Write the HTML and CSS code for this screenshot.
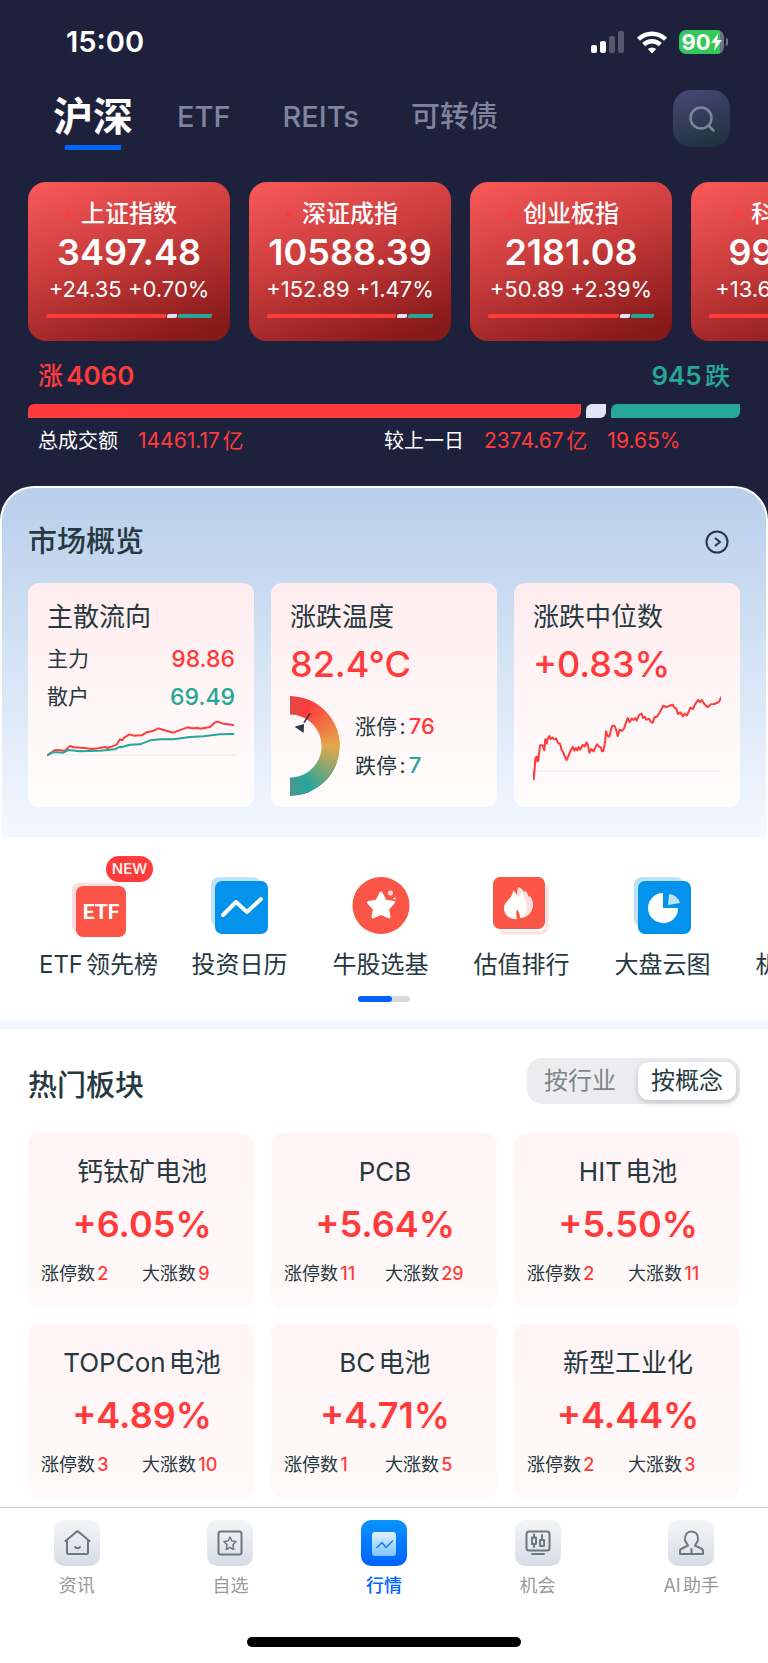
FILE: index.html
```html
<!DOCTYPE html>
<html lang="zh-CN">
<head>
    <meta charset="UTF-8">
    <meta name="viewport" content="width=device-width, initial-scale=1.0">
    <title>行情 - 沪深</title>
    <link rel="stylesheet" href="styles.css">
</head>
<body>

<header class="top">
    <!-- Status bar -->
    <div class="status">
        <span class="time">15:00</span>
        <div class="status-icons">
            <svg width="34" height="24" viewBox="0 0 34 24" fill="#fff">
                <rect x="0" y="15" width="6" height="8" rx="2"/>
                <rect x="9" y="11" width="6" height="12" rx="2"/>
                <rect x="18" y="6" width="6" height="17" rx="2" opacity=".25"/>
                <rect x="27" y="1" width="6" height="22" rx="2" opacity=".25"/>
            </svg>
            <svg width="30" height="24" viewBox="0 0 30 24" fill="none" stroke="#fff" stroke-width="4.5">
                <path d="M1.5 9.2a19.2 19.2 0 0 1 27 0"/>
                <path d="M6.7 14.6a11.8 11.8 0 0 1 16.6 0"/>
                <path d="M15 23.5l-4.2-4.4a6 6 0 0 1 8.4 0z" fill="#fff" stroke="none"/>
            </svg>
            <div class="battery">
                <span>90</span>
                <svg width="11" height="18" viewBox="0 0 11 18"><path d="M7.5 0L0 10h4.5L3 18l8-11H6.2z" fill="#fff"/></svg>
            </div>
        </div>
    </div>

    <!-- Market tabs -->
    <div class="nav">
        <nav class="tabs">
            <a href="#" class="active">沪深</a>
            <a href="#">ETF</a>
            <a href="#">REITs</a>
            <a href="#">可转债</a>
        </nav>
        <button class="search-btn" aria-label="搜索">
            <svg width="28" height="28" viewBox="0 0 28 28" fill="none" stroke="#7b8794" stroke-width="2.5" stroke-linecap="round">
                <circle cx="13" cy="13" r="10.5"/>
                <path d="M20.5 20.5l5 5"/>
            </svg>
        </button>
    </div>

    <!-- Index cards -->
    <div class="indices">
        <article class="index-card">
            <h3>上证指数</h3>
            <strong>3497.48</strong>
            <p>+24.35 +0.70%</p>
            <div class="bar"><i class="up" style="flex-grow:119"></i><i class="flat"></i><i class="down" style="flex-grow:34"></i></div>
        </article>
        <article class="index-card">
            <h3>深证成指</h3>
            <strong>10588.39</strong>
            <p>+152.89 +1.47%</p>
            <div class="bar"><i class="up" style="flex-grow:127"></i><i class="flat"></i><i class="down" style="flex-grow:25"></i></div>
        </article>
        <article class="index-card">
            <h3>创业板指</h3>
            <strong>2181.08</strong>
            <p>+50.89 +2.39%</p>
            <div class="bar"><i class="up" style="flex-grow:129"></i><i class="flat"></i><i class="down" style="flex-grow:23"></i></div>
        </article>
        <article class="index-card">
            <h3>科创50</h3>
            <strong>994.45</strong>
            <p>+13.62 +1.39%</p>
            <div class="bar"><i class="up" style="flex-grow:125"></i><i class="flat"></i><i class="down" style="flex-grow:27"></i></div>
        </article>
    </div>

    <!-- Rise / fall breadth -->
    <div class="breadth">
        <span class="red">涨<b>4060</b></span>
        <span class="green"><b>945</b>跌</span>
    </div>
    <div class="bar breadth-bar"><i class="up" style="flex-grow:554"></i><i class="flat"></i><i class="down" style="flex-grow:129"></i></div>
    <div class="turnover">
        <p><span>总成交额</span><em>14461.17亿</em></p>
        <p><span>较上一日</span><em>2374.67亿</em><em>19.65%</em></p>
    </div>
</header>

<!-- Market overview -->
<section class="overview">
    <div class="overview-head">
        <h2>市场概览</h2>
        <a href="#" class="more" aria-label="更多">
            <svg width="24" height="24" viewBox="0 0 24 24" fill="none" stroke="#263840" stroke-width="2">
                <circle cx="12" cy="12" r="10.5"/>
                <path d="M10 8l5 4-5 4"/>
            </svg>
        </a>
    </div>
    <div class="cards">
        <article class="card">
            <h3>主散流向</h3>
            <dl class="flow">
                <div><dt>主力</dt><dd class="red">98.86</dd></div>
                <div><dt>散户</dt><dd class="green">69.49</dd></div>
            </dl>
            <svg class="flow-chart" viewBox="0 0 564 144" fill="none" stroke-width="6" stroke-linejoin="round">
                <path d="M0 117H566" stroke="#efefef" stroke-width="5"/>
                <path d="M0 118L24 102 40 103 54 105 64 94 70 90 79 94 114 96 134 99 154 97 174 93 181 96 196 91 209 86 215 76 219 70 225 73 232 65 247 55 259 59 284 58 299 49 315 46 334 37 350 42 379 50 395 44 421 34 434 37 454 36 459 38 489 33 503 20 511 17 529 23 545 25 561 28" stroke="#ff3b3b"/>
                <path d="M0 118L19 108 49 110 64 102 99 106 159 104 204 100 219 92 222 94 249 86 279 85 309 73 339 70 379 70 429 63 469 61 519 55 561 54" stroke="#26a699"/>
            </svg>
        </article>

        <article class="card">
            <h3>涨跌温度</h3>
            <strong class="value">82.4°C</strong>
            <div class="temp">
                <div class="gauge">
                    <svg width="50" height="100" viewBox="0 0 150 300">
                        <path d="M60 52L42 80" stroke="#263840" stroke-width="5"/>
                        <path d="M14 92l28-8-1 27z" fill="#263840"/>
                    </svg>
                </div>
                <ul>
                    <li>涨停:<b class="red">76</b></li>
                    <li>跌停:<b class="green">7</b></li>
                </ul>
            </div>
        </article>

        <article class="card">
            <h3>涨跌中位数</h3>
            <strong class="value">+0.83%</strong>
            <svg class="median-chart" viewBox="0 0 564 312" fill="none" stroke-width="6" stroke-linejoin="round">
                <path d="M8 237H566" stroke="#efefef" stroke-width="5"/>
                <path d="M0 238L2 262 5 230 7 200 11 194 13 208 16 206 21 160 29 160 34 175 37 142 41 154 45 138 49 132 53 141 58 136 63 142 69 139 76 154 81 155 86 174 91 181 96 195 101 204 107 190 112 178 119 165 124 176 128 168 133 175 137 165 142 173 149 159 155 163 161 151 165 160 169 182 175 171 182 178 188 164 192 157 198 164 204 167 207 178 211 177 216 152 219 118 224 132 229 134 234 113 238 101 244 101 249 112 254 132 260 113 267 117 273 109 279 92 284 78 290 90 296 80 301 84 307 78 311 86 319 68 326 65 330 78 335 74 340 83 348 80 354 90 359 92 365 75 371 75 379 63 391 41 399 45 409 42 419 38 425 48 430 50 435 67 442 61 450 73 455 65 461 71 467 60 472 47 480 51 486 37 495 24 501 30 506 24 513 34 519 42 525 45 533 37 543 36 550 34 559 28 565 14" stroke="#ff3b3b"/>
            </svg>
        </article>
    </div>
</section>

<!-- Quick links -->
<section class="quick">
    <div class="quick-list">
        <a href="#">
            <svg width="60" height="60" viewBox="0 0 60 60">
                <rect x="3" y="6" width="50" height="50" rx="7" fill="#fde0dd"/>
                <rect x="7" y="9" width="50" height="51" rx="7" fill="#fa5546"/>
                <text x="32" y="42" text-anchor="middle" class="etf-text">ETF</text>
            </svg>
            <span class="badge">NEW</span>
            <span>ETF领先榜</span>
        </a>
        <a href="#">
            <svg width="60" height="60" viewBox="0 0 60 60">
                <rect x="1" y="0" width="50" height="50" rx="8" fill="#bfe2fb"/>
                <rect x="5" y="4" width="53" height="53" rx="7" fill="#0392ec"/>
                <path d="M13 38L26 25 37 35 51 22" fill="none" stroke="#fff" stroke-width="4" stroke-linecap="round" stroke-linejoin="round"/>
            </svg>
            <span>投资日历</span>
        </a>
        <a href="#">
            <svg width="60" height="60" viewBox="0 0 60 60">
                <circle cx="30" cy="28.500" r="28.500" fill="#fa5546"/>
                <path d="M30 16L34 24 42.500 25.500 36.500 32 38 40 30 36.500 22 40 23.500 32 17.500 25.500 26 24z" fill="#fff" stroke="#fff" stroke-width="3" stroke-linejoin="round"/>
                <circle cx="39.500" cy="16" r="2.500" fill="#fde0dd"/>
                <circle cx="43.500" cy="21.500" r="1.200" fill="#fde0dd"/>
            </svg>
            <span>牛股选基</span>
        </a>
        <a href="#">
            <svg width="60" height="60" viewBox="0 0 60 60">
                <path d="M9 56H48a7 7 0 0 0 7-7V8" fill="none" stroke="#fde0dd" stroke-width="3"/>
                <rect x="1" y="0" width="52" height="52" rx="7" fill="#fa5546"/>
                <path d="M26 10q5 2 6 5l2-1q2 4 3 6l1-1q4 6 3 11-2 9-11 11l-7-12z" fill="#fde0dd"/>
                <path d="M21 13c4 4 4 6 5 8l4-6c3 9 8 14 3 22-1 2-3 4-5 4 0-4-1-7-3-9-1 3-1 7 0 10-7 1-13-4-13-11 0-7 9-9 9-18z" fill="#fff"/>
            </svg>
            <span>估值排行</span>
        </a>
        <a href="#">
            <svg width="60" height="60" viewBox="0 0 60 60">
                <rect x="1" y="0" width="50" height="50" rx="8" fill="#bfe2fb"/>
                <rect x="5" y="4" width="53" height="53" rx="7" fill="#0392ec"/>
                <path d="M45 34a15 15 0 0 1-17 12z" fill="#bfe2fb"/>
                <path d="M30 16v15h15a15 15 0 1 1-15-15z" fill="#fff"/>
                <path d="M36 17a12 12 0 0 1 11 9L35 28z" fill="#bfe2fb"/>
            </svg>
            <span>大盘云图</span>
        </a>
        <a href="#">
            <svg width="60" height="60" viewBox="0 0 60 60"></svg>
            <span>机构持仓</span>
        </a>
    </div>
    <div class="pager"><i></i></div>
</section>

<!-- Hot sectors -->
<section class="hot">
    <div class="hot-head">
        <h2>热门板块</h2>
        <div class="segment">
            <button>按行业</button>
            <button class="active">按概念</button>
        </div>
    </div>
    <div class="cards">
        <article class="sector">
            <h3>钙钛矿电池</h3>
            <strong>+6.05%</strong>
            <p><span>涨停数<b>2</b></span><span>大涨数<b>9</b></span></p>
        </article>
        <article class="sector">
            <h3>PCB</h3>
            <strong>+5.64%</strong>
            <p><span>涨停数<b>11</b></span><span>大涨数<b>29</b></span></p>
        </article>
        <article class="sector">
            <h3>HIT电池</h3>
            <strong>+5.50%</strong>
            <p><span>涨停数<b>2</b></span><span>大涨数<b>11</b></span></p>
        </article>
        <article class="sector">
            <h3>TOPCon电池</h3>
            <strong>+4.89%</strong>
            <p><span>涨停数<b>3</b></span><span>大涨数<b>10</b></span></p>
        </article>
        <article class="sector">
            <h3>BC电池</h3>
            <strong>+4.71%</strong>
            <p><span>涨停数<b>1</b></span><span>大涨数<b>5</b></span></p>
        </article>
        <article class="sector">
            <h3>新型工业化</h3>
            <strong>+4.44%</strong>
            <p><span>涨停数<b>2</b></span><span>大涨数<b>3</b></span></p>
        </article>
    </div>
</section>

<!-- Bottom tab bar -->
<footer class="tabbar">
    <nav>
        <a href="#">
            <svg width="46" height="46" viewBox="0 0 46 46">
                <path d="M13 20v12.500a1.500 1.500 0 0 0 1.500 1.500h18a1.500 1.500 0 0 0 1.500-1.500V20M11.500 21L23.500 11 35.500 21"/>
                <path d="M21 27q2.500 2.500 5 0"/>
            </svg>
            <span>资讯</span>
        </a>
        <a href="#">
            <svg width="46" height="46" viewBox="0 0 46 46">
                <rect x="11.500" y="11.500" width="23" height="23" rx="2"/>
                <path d="M23 17l1.900 4 4.100.6-3 3.200.7 4.700-3.700-2.200-3.700 2.200.7-4.700-3-3.200 4.100-.6z" stroke-width="1.500"/>
            </svg>
            <span>自选</span>
        </a>
        <a href="#" class="active">
            <svg width="46" height="46" viewBox="0 0 46 46">
                <defs>
                    <linearGradient id="tile" x1="0" y1="0" x2="0" y2="1">
                        <stop offset="0" stop-color="#e3f4ff"/>
                        <stop offset="1" stop-color="#7cc4ff"/>
                    </linearGradient>
                </defs>
                <rect x="11" y="12" width="24" height="24" rx="3" fill="url(#tile)" stroke="none"/>
                <path d="M16 27.500l5-5 4 5 6.500-6.500" stroke="#0a84ff" stroke-width="1.500"/>
            </svg>
            <span>行情</span>
        </a>
        <a href="#">
            <svg width="46" height="46" viewBox="0 0 46 46">
                <rect x="11.500" y="11.500" width="23" height="19" rx="2.500"/>
                <path d="M17 34H29M19 14.500v3M19 24v3M27 15v5"/>
                <rect x="17" y="17.500" width="4" height="6.500"/>
                <rect x="25" y="20" width="4" height="6"/>
            </svg>
            <span>机会</span>
        </a>
        <a href="#">
            <svg width="46" height="46" viewBox="0 0 46 46">
                <path d="M20 25.500L17 20.500q-.5-9 6.500-9t6.500 9L27 25.500 34 29q1 .5 1 2v3H12v-3q0-1.500 1-2z"/>
                <path d="M23.500 29v4"/>
            </svg>
            <span>AI助手</span>
        </a>
    </nav>
    <div class="home-indicator"></div>
</footer>

</body>
</html>
```
FILE: styles.css
```css
* {
    box-sizing: border-box;
}
body {
    margin: 0;
    font-family: Inter, "Noto Sans CJK SC", sans-serif;
    color: #263840;
    background-color: #fff;
    overflow-x: hidden;
    text-autospace: normal;
}
h2, h3, p, ul, dl, dd {
    margin: 0;
    padding: 0;
    font-weight: 400;
}
ul {
    list-style: none;
}
a {
    color: inherit;
    text-decoration: none;
}
button {
    border: none;
    padding: 0;
    font-family: inherit;
    color: inherit;
    cursor: pointer;
}
svg {
    display: block;
    flex-shrink: 0;
}
h2 {
    font-size: 29px;
    line-height: 40px;
    font-weight: 500;
}
.red {
    color: #ff3b3b;
}
.green {
    color: #26a699;
}

/* Header */
.top {
    background-color: #1e213c;
    color: #fff;
    padding: 26px 28px 65px;
    overflow: hidden;
}
.status {
    display: flex;
    justify-content: space-between;
    align-items: center;
    padding: 0 16px 0 38px;
}
.time {
    font-size: 29px;
    line-height: 32px;
    font-weight: 600;
}
.status-icons {
    display: flex;
    align-items: center;
    gap: 12px;
}
.battery {
    position: relative;
    display: flex;
    align-items: center;
    justify-content: center;
    width: 45px;
    height: 24px;
    border-radius: 7px;
    background: linear-gradient(to right, #34c759 91%, #6f7386 91%);
    font-size: 22px;
    font-weight: 700;
}
.battery::after {
    content: "";
    position: absolute;
    right: -4px;
    top: 8px;
    width: 2px;
    height: 8px;
    border-radius: 0 2px 2px 0;
    background-color: #6f7386;
}
.nav {
    display: flex;
    justify-content: space-between;
    align-items: flex-start;
    margin-top: 32px;
    padding: 0 10px 0 25px;
}
.tabs {
    display: flex;
    align-items: center;
    gap: 52px;
    font-size: 29px;
    line-height: 54px;
    font-weight: 500;
    color: #80849f;
}
.tabs .active {
    position: relative;
    margin-right: -8px;
    font-size: 40px;
    font-weight: 600;
    color: #fff;
}
.tabs .active::after {
    content: "";
    position: absolute;
    left: 12px;
    right: 12px;
    bottom: -6px;
    height: 5px;
    background-color: #0062ff;
}
.search-btn {
    display: flex;
    align-items: center;
    justify-content: center;
    width: 57px;
    height: 57px;
    border-radius: 18px;
    background: linear-gradient(160deg, #4a4878, #2c3a52 60%, #1b2f3a);
}

/* Index cards */
.indices {
    display: flex;
    gap: 19px;
    margin-top: 35px;
}
.index-card {
    flex: 0 0 202px;
    padding: 18px 18px 23px;
    border-radius: 18px;
    background: linear-gradient(160deg, #f55656 5%, #c83b3b 45%, #871919 92%);
    text-align: center;
}
.index-card h3 {
    display: flex;
    align-items: center;
    justify-content: center;
    gap: 10px;
    padding-right: 16px;
    font-size: 24px;
    line-height: 28px;
    font-weight: 500;
}
.index-card h3::before {
    content: "";
    width: 6px;
    height: 6px;
    border-radius: 50%;
    background-color: #ff3b3b;
}
.index-card strong {
    display: block;
    margin: 0 -10px;
    font-size: 36px;
    line-height: 48px;
    font-weight: 600;
}
.index-card p {
    margin: 0 -10px;
    font-size: 22px;
    line-height: 26px;
    white-space: nowrap;
}

/* Up / flat / down bar */
.bar {
    display: flex;
    gap: 1px;
    height: 4px;
    margin-top: 12px;
}
.bar i {
    flex-basis: 0;
    border-radius: 2px 0;
}
.bar .up {
    background-color: #ff3b3b;
}
.bar .flat {
    flex: 0 0 10px;
    background-color: #e0e4f7;
}
.bar .down {
    background-color: #26a699;
}
.breadth {
    display: flex;
    justify-content: space-between;
    margin-top: 19px;
    padding: 0 10px;
    font-size: 25px;
    line-height: 32px;
    font-weight: 500;
}
.breadth b {
    font-size: 26px;
    font-weight: 600;
}
.breadth-bar {
    gap: 5px;
    height: 14px;
}
.breadth-bar i {
    border-radius: 6px 0;
}
.breadth-bar .flat {
    flex-basis: 20px;
}
.turnover {
    display: grid;
    grid-template-columns: 1fr 1fr;
    margin-top: 9px;
    padding-left: 10px;
    font-size: 20px;
    line-height: 28px;
}
.turnover p {
    display: flex;
    gap: 20px;
    white-space: nowrap;
}
.turnover p + p {
    margin-left: -5px;
}
.turnover em {
    color: #ff3b3b;
    font-size: 21px;
    font-style: normal;
}

/* Market overview */
.overview {
    position: relative;
    margin-top: -34px;
    padding: 34px 26px 30px;
    border: 2px solid #fff;
    border-bottom: none;
    border-radius: 34px 34px 0 0;
    background: linear-gradient(#b8cfeb, #c6d9f0 25%, #f3f8ff);
}
.overview-head {
    display: flex;
    justify-content: space-between;
    align-items: center;
    margin-bottom: 21px;
    padding-right: 11px;
}
.cards {
    display: grid;
    grid-template-columns: repeat(3, 1fr);
    gap: 17px;
}
.card {
    padding: 17px 19px 11px;
    border-radius: 11px;
    background: linear-gradient(#ffecee, #fff5f6 50%, #fffcfc);
}
.card h3 {
    font-size: 26px;
    line-height: 34px;
    white-space: nowrap;
}
.flow {
    margin-top: 6px;
    font-size: 21px;
    line-height: 38px;
}
.flow div {
    display: flex;
    justify-content: space-between;
}
.flow dd {
    font-size: 23px;
    font-weight: 500;
}
.flow-chart, .median-chart {
    width: 100%;
}
.median-chart {
    margin-top: 4px;
}
.value {
    display: block;
    margin-top: 6px;
    font-size: 36px;
    line-height: 48px;
    font-weight: 500;
    color: #ff3b3b;
}
.temp {
    display: flex;
    align-items: center;
    gap: 15px;
    margin-top: 8px;
    font-size: 21px;
    line-height: 38px;
}
.temp b {
    margin-left: 3px;
    font-size: 22px;
    font-weight: 500;
}
.gauge {
    position: relative;
    width: 50px;
    height: 100px;
}
/* half ring, masked out of a conic gradient */
.gauge::before {
    content: "";
    position: absolute;
    inset: 0;
    border-radius: 0 50px 50px 0;
    background: conic-gradient(from 0deg at 0 50%, #de4848, #ff3b3b 25deg, #e3a84c 90deg, #26a699 155deg, #4a968c 180deg);
    -webkit-mask: radial-gradient(circle at 0 50%, transparent 31px, #000 32px);
    mask: radial-gradient(circle at 0 50%, transparent 31px, #000 32px);
}
.gauge svg {
    position: relative;
}

/* Quick links */
.quick {
    padding-bottom: 18px;
    border-bottom: 9px solid #f2f6ff;
    overflow: hidden;
}
.quick-list {
    display: flex;
    padding: 40px 0 0 28px;
}
.quick-list a {
    position: relative;
    flex: 0 0 141px;
    display: flex;
    flex-direction: column;
    align-items: center;
    gap: 13px;
    font-size: 24px;
    line-height: 30px;
    white-space: nowrap;
}
.etf-text {
    font-family: Roboto, sans-serif;
    font-size: 21px;
    font-weight: 700;
    fill: #fff;
}
.quick-list .badge {
    position: absolute;
    top: -21px;
    right: 16px;
    width: 47px;
    border-radius: 13px;
    background-color: #ff3b3b;
    color: #fff;
    font-size: 15px;
    line-height: 26px;
    font-weight: 500;
    text-align: center;
}
.pager {
    width: 52px;
    height: 6px;
    margin: 16px auto 0;
    border-radius: 3px;
    background-color: #d9d9d9;
}
.pager i {
    display: block;
    width: 34px;
    height: 6px;
    border-radius: 3px;
    background-color: #0062ff;
}

/* Hot sectors */
.hot {
    padding: 29px 28px 9px;
}
.hot-head {
    display: flex;
    justify-content: space-between;
    align-items: flex-end;
    margin-bottom: 29px;
}
.hot-head h2 {
    line-height: 36px;
}
.segment {
    display: flex;
    gap: 9px;
    padding: 4px;
    border-radius: 15px;
    background-color: #ededef;
}
.segment button {
    width: 98px;
    border-radius: 11px;
    background: none;
    font-size: 24px;
    line-height: 38px;
    color: #7b868b;
}
.segment button.active {
    background-color: #fff;
    color: #263840;
    box-shadow: 0 2px 6px rgba(0, 0, 0, 0.2);
}
.sector {
    padding: 21px 11px 20px 13px;
    border-radius: 11px;
    background: linear-gradient(#fff4f6, #fff9f9);
    text-align: center;
    white-space: nowrap;
}
.sector h3 {
    font-size: 26px;
    line-height: 36px;
}
.sector strong {
    display: block;
    margin: 10px 0 13px;
    font-size: 36px;
    line-height: 48px;
    font-weight: 600;
    color: #ff3b3b;
}
.sector p {
    display: grid;
    grid-template-columns: 1fr 1fr;
    font-size: 18px;
    line-height: 26px;
    text-align: left;
}
.sector b {
    font-weight: 500;
    color: #ff3b3b;
}

/* Bottom tab bar */
.tabbar {
    border-top: 1px solid #ccc;
    padding: 12px 0 16px;
}
.tabbar nav {
    display: flex;
    margin-bottom: 38px;
}
.tabbar a {
    flex: 1;
    display: flex;
    flex-direction: column;
    align-items: center;
    gap: 7px;
    font-size: 18px;
    line-height: 26px;
    color: #999;
}
.tabbar svg {
    border-radius: 10px;
    background: linear-gradient(#f4f5f6, #d7dce6);
    fill: none;
    stroke: #6b7880;
    stroke-width: 2;
    stroke-linejoin: round;
    stroke-linecap: round;
}
.tabbar .active {
    color: #0062ff;
    font-weight: 500;
}
.tabbar .active svg {
    background: linear-gradient(#0a94ff, #0062ff);
}
.home-indicator {
    width: 274px;
    height: 10px;
    margin: 0 auto;
    border-radius: 5px;
    background-color: #000;
}
```
